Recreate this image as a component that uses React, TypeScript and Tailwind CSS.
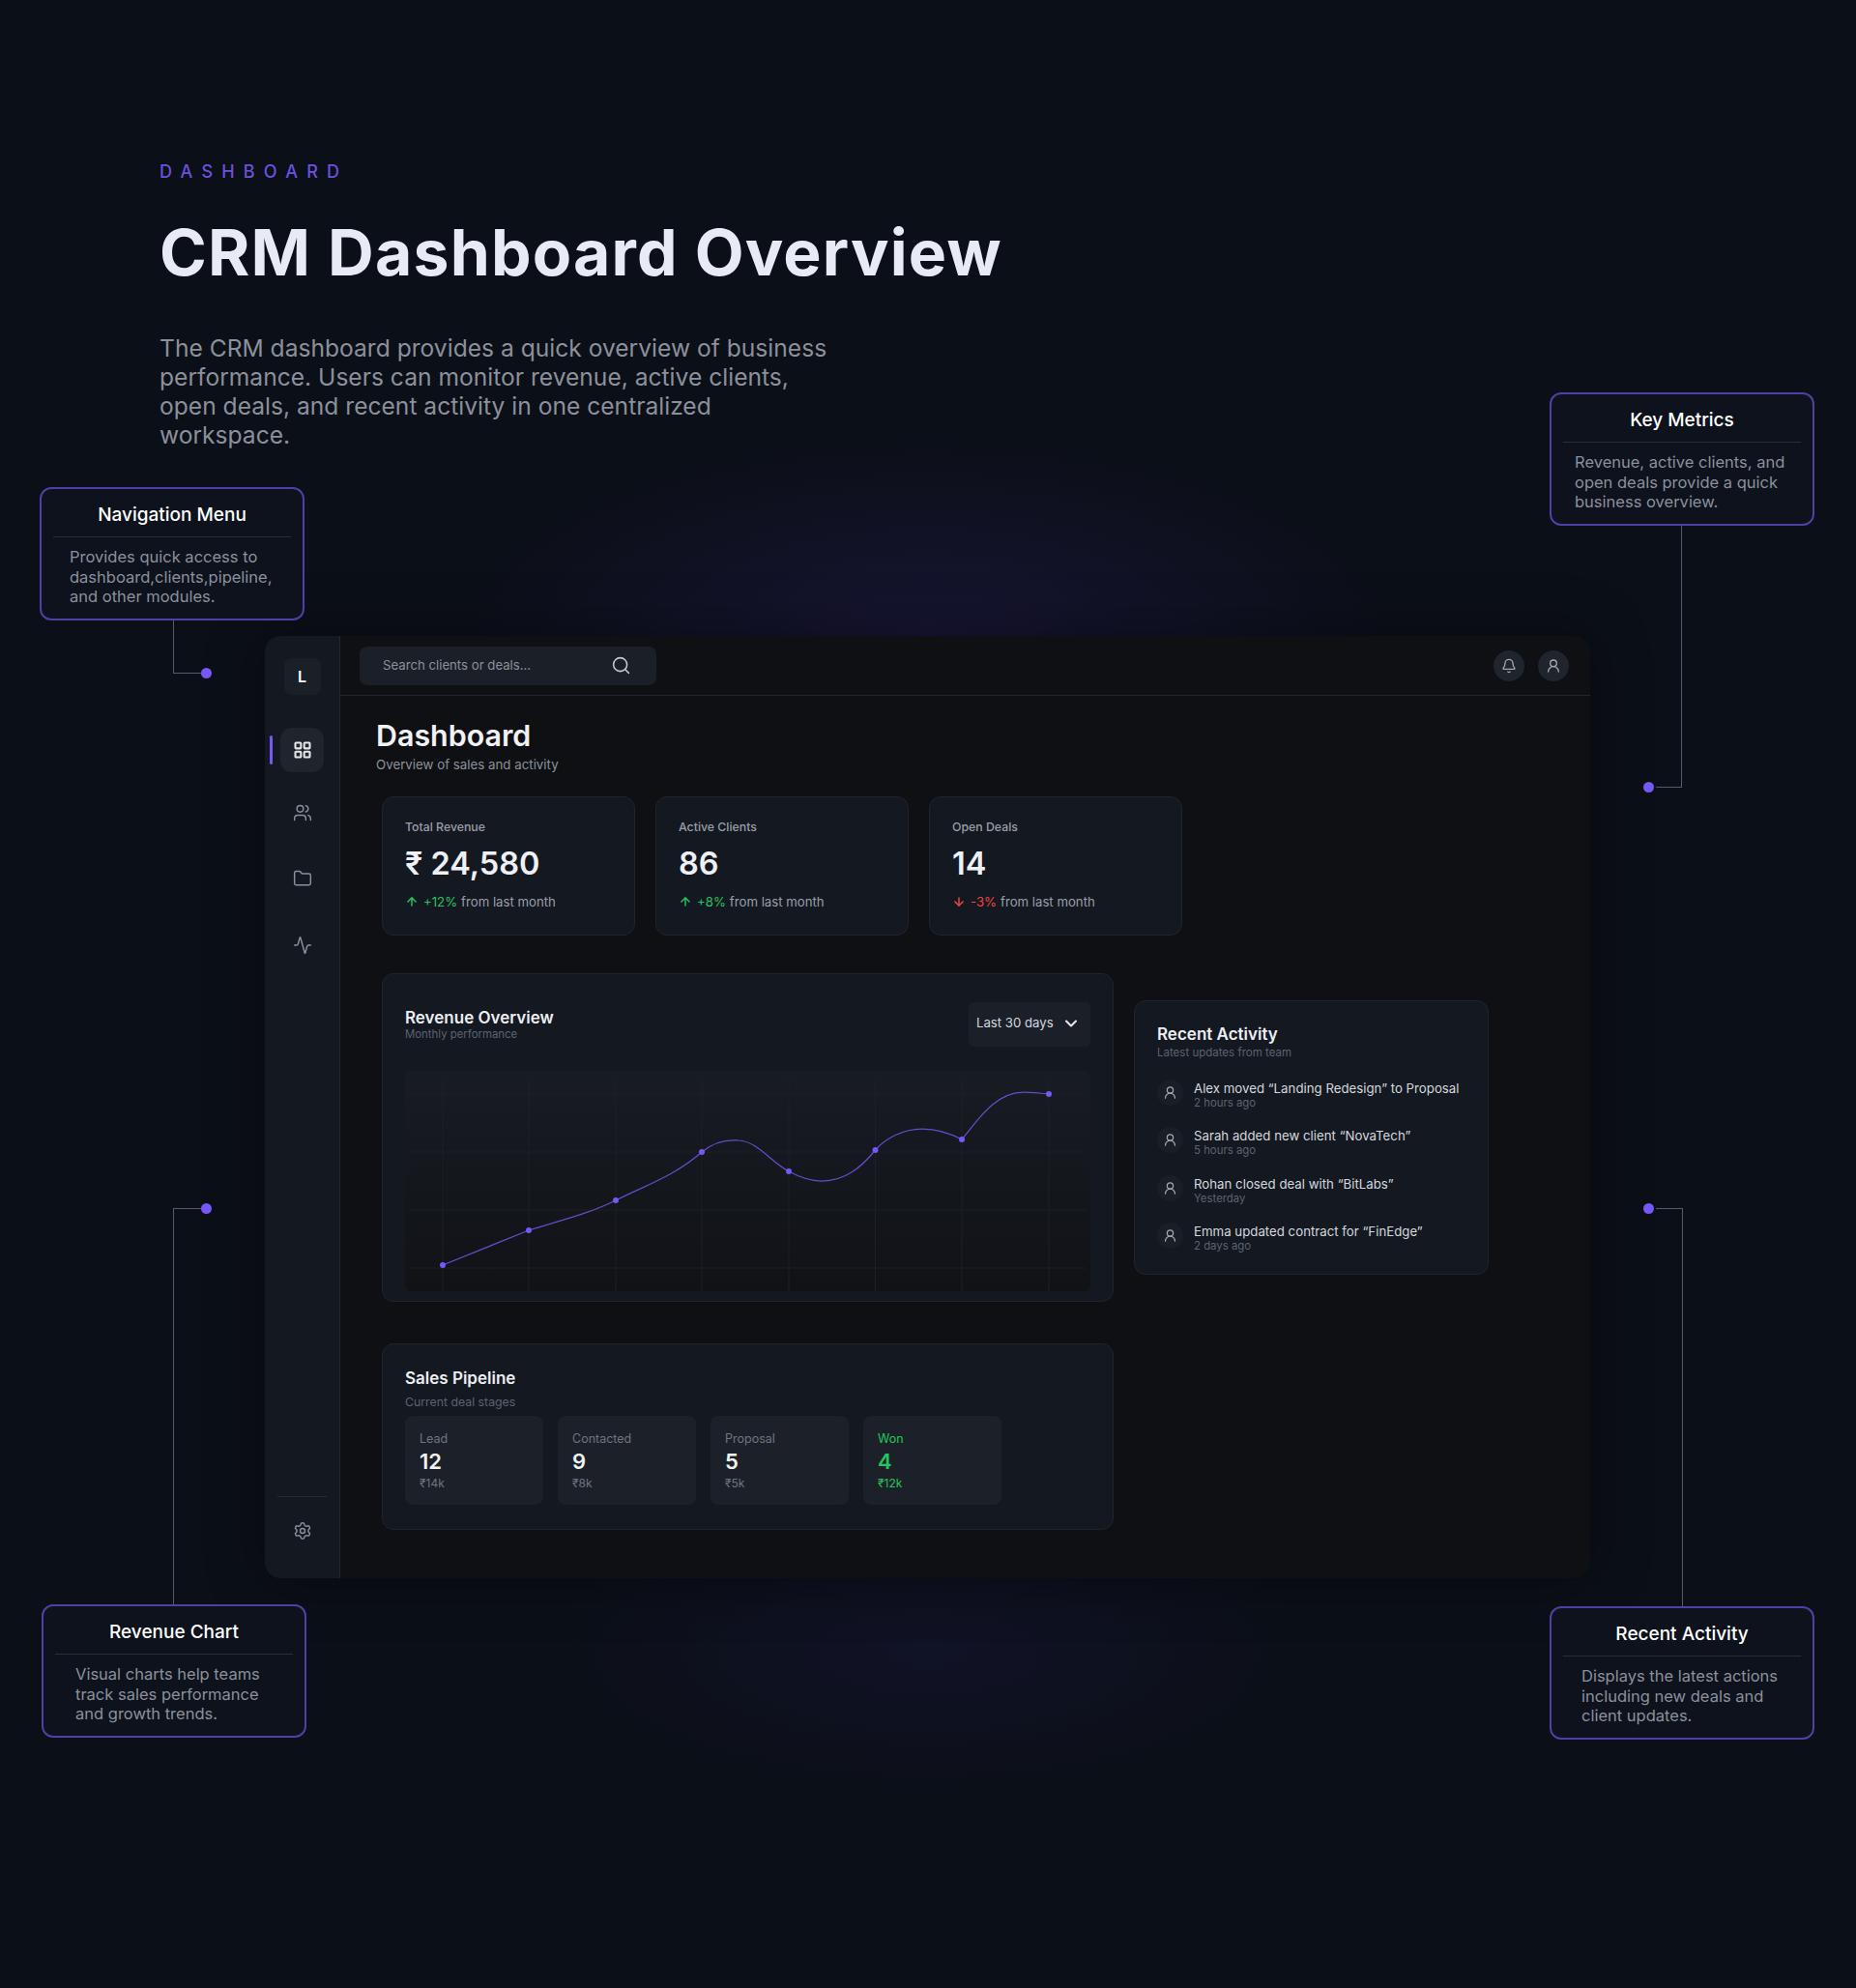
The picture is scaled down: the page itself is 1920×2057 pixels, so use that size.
import { ArrowDown, ArrowUp, Activity, Bell, ChevronDown, Folder, LayoutGrid, Search, Settings, UserRound, Users } from "lucide-react";

const font = { fontFamily: "Inter, sans-serif" };

const stats = [
  { label: "Total Revenue", value: "₹ 24,580", change: "+12%", up: true },
  { label: "Active Clients", value: "86", change: "+8%", up: true },
  { label: "Open Deals", value: "14", change: "-3%", up: false },
];

const activity = [
  { text: "Alex moved “Landing Redesign” to Proposal", time: "2 hours ago" },
  { text: "Sarah added new client “NovaTech”", time: "5 hours ago" },
  { text: "Rohan closed deal with “BitLabs”", time: "Yesterday" },
  { text: "Emma updated contract for “FinEdge”", time: "2 days ago" },
];

const stages = [
  { label: "Lead", count: "12", amount: "₹14k" },
  { label: "Contacted", count: "9", amount: "₹8k" },
  { label: "Proposal", count: "5", amount: "₹5k" },
  { label: "Won", count: "4", amount: "₹12k", won: true },
];

const xs = [39, 128, 218, 307, 397, 486.5, 576, 666];
const points: [number, number][] = [[39, 201], [128, 165], [218, 134], [307, 84], [397, 104], [486.5, 82], [576, 71], [666, 24]];

function Callout({ title, lines, className, bodyClass }: { title: string; lines: string[]; className: string; bodyClass: string }) {
  return (
    <div className={`absolute w-[274px] h-[138px] rounded-xl border-2 border-[#4f40a6] bg-[#0d121d] ${className}`}>
      <div className="mx-[12px] h-[50px] pt-[5px] border-b border-[#2a2e38] flex items-center justify-center text-[19px] font-medium text-white">
        {title}
      </div>
      <div className={`pt-[10px] text-[16.5px] leading-[20.5px] text-[#8b909b] ${bodyClass}`}>
        {lines.map((l) => (
          <div key={l}>{l}</div>
        ))}
      </div>
    </div>
  );
}

function Dot({ className }: { className: string }) {
  return <div className={`absolute w-[11px] h-[11px] rounded-full bg-[#7558f5] ${className}`} />;
}

function Line({ className }: { className: string }) {
  return <div className={`absolute bg-[#565b66] ${className}`} />;
}

function Chart() {
  return (
    <div className="mt-[25px] h-[228px] rounded-md bg-gradient-to-b from-[#181c23] to-[#101216] overflow-hidden">
      <svg width="709" height="228" viewBox="0 0 709 228" fill="none">
        {xs.map((x) => (
          <line key={x} x1={x} y1="8" x2={x} y2="228" stroke="#1c2027" strokeWidth="1" />
        ))}
        {[24, 84, 144, 204].map((y) => (
          <line key={y} x1="4" y1={y} x2="704" y2={y} stroke="#1c2027" strokeWidth="1" />
        ))}
        <path
          d="M39 201 L128 165 C160 155 190 148 218 134 C250 118 280 108 307 84 C320 73 333 71 345 72 C365 73 378 94 397 104 C408 110 420 114 431 114 C455 114 472 100 486.5 82 C497 70 515 60 535 60 C552 60 565 65 576 71 C592 52 610 22 640 22 C650 22 658 23 666 24"
          stroke="#644dcc"
          strokeWidth="1.25"
        />
        {points.map(([x, y]) => (
          <circle key={x} cx={x} cy={y} r="3" fill="#7558f5" />
        ))}
      </svg>
    </div>
  );
}

export default function App() {
  return (
    <div style={font} className="relative w-[1920px] h-[2057px] overflow-hidden bg-[#0b0f17]">
      <div className="absolute left-[460px] top-[450px] w-[1000px] h-[420px] rounded-full bg-[radial-gradient(closest-side,rgba(70,44,165,0.2),transparent)]" />
      <div className="absolute left-[560px] top-[1560px] w-[800px] h-[300px] rounded-full bg-[radial-gradient(closest-side,rgba(50,40,130,0.14),transparent)]" />

      <div className="relative pl-[165px] pt-[167px]">
        <div className="text-[18px] leading-[22px] font-medium tracking-[9.2px] text-[#6a52de]">DASHBOARD</div>
        <h1 className="mt-[32px] text-[66px] leading-[80px] font-bold tracking-[1.2px] text-[#e8ebf5]">CRM Dashboard Overview</h1>
        <p className="mt-[44px] w-[700px] text-[24.6px] leading-[30px] text-[#8b909b]">
          The CRM dashboard provides a quick overview of business performance. Users can monitor revenue, active clients, open deals, and recent activity in one centralized workspace.
        </p>
      </div>

      <div className="relative ml-[274px] mt-[193px] w-[1371px] h-[975px] flex rounded-2xl overflow-hidden bg-[#0e1013] shadow-[0_0_60px_rgba(2,3,8,0.4)]">
        <aside className="relative w-[78px] shrink-0 flex flex-col items-center border-r border-[#232730] bg-[#141821]">
          <div className="mt-[23px] w-[38px] h-[38px] rounded-lg bg-[#1b2028] flex items-center justify-center text-[16px] font-semibold text-white">L</div>
          <div className="absolute left-[5px] top-[103px] w-[3px] h-[30px] rounded-full bg-[#7558f5]" />
          <div className="mt-[34px] w-[45px] h-[46px] rounded-xl bg-[#1f242d] flex items-center justify-center">
            <LayoutGrid size={20} strokeWidth={2.5} className="text-[#e5e7eb]" />
          </div>
          <Users size={20} strokeWidth={1.75} className="mt-[32px] text-[#8a8f99]" />
          <Folder size={20} strokeWidth={1.75} className="mt-[48px] text-[#8a8f99]" />
          <Activity size={20} strokeWidth={1.75} className="mt-[49px] text-[#8a8f99]" />
          <div className="mt-auto w-[51px] border-t border-[#262a33]" />
          <Settings size={20} strokeWidth={1.75} className="mt-[25px] mb-[39px] text-[#8a8f99]" />
        </aside>

        <div className="flex-1 min-w-0">
          <header className="h-[62px] border-b border-[#23262c] flex items-center justify-between pl-[20px] pr-[22px]">
            <div className="w-[307px] h-[40px] rounded-lg bg-[#1b2028] flex items-center justify-between pl-[24px] pr-[26px]">
              <span className="text-[13.2px] text-[#8b909b]">Search clients or deals...</span>
              <Search size={21} strokeWidth={1.75} className="text-[#c5c8cf]" />
            </div>
            <div className="flex gap-[14px]">
              <div className="w-[32px] h-[32px] rounded-full bg-[#1f242d] flex items-center justify-center">
                <Bell size={16} strokeWidth={2} className="text-[#a4a8b1]" />
              </div>
              <div className="w-[32px] h-[32px] rounded-full bg-[#1f242d] flex items-center justify-center">
                <UserRound size={16} strokeWidth={2} className="text-[#a4a8b1]" />
              </div>
            </div>
          </header>

          <main className="pl-[37px]">
            <h2 className="mt-[20px] text-[30.4px] leading-[42px] font-semibold text-[#f1f2f5]">Dashboard</h2>
            <p className="text-[13.3px] leading-[18px] text-[#8b909b]">Overview of sales and activity</p>

            <div className="mt-[24px] ml-[6px] flex gap-[21px]">
              {stats.map((s) => (
                <div key={s.label} className="w-[262px] h-[144px] rounded-xl border border-[#1f242d] bg-[#141821] pl-[23px] pt-[22px]">
                  <div className="text-[12.3px] leading-[18px] font-medium text-[#9a9ea8]">{s.label}</div>
                  <div className="mt-[9px] text-[32.5px] leading-[40px] font-semibold text-[#eef0f5]">{s.value}</div>
                  <div className="mt-[10px] flex items-center text-[13.2px] leading-[18px] text-[#9a9ea8]">
                    {s.up ? (
                      <ArrowUp size={14} strokeWidth={2.5} className="text-[#22c55e]" />
                    ) : (
                      <ArrowDown size={14} strokeWidth={2.5} className="text-[#ef4444]" />
                    )}
                    <span className={`ml-[5px] mr-[4px] ${s.up ? "text-[#22c55e]" : "text-[#ef4444]"}`}>{s.change}</span>
                    from last month
                  </div>
                </div>
              ))}
            </div>

            <div className="mt-[39px] ml-[6px] flex items-start gap-[21px]">
              <div className="w-[757px]">
                <section className="h-[340px] rounded-xl border border-[#1f242d] bg-[#141821] px-[23px] pt-[29px]">
                  <div className="flex items-start justify-between">
                    <div className="pt-[6px]">
                      <h3 className="text-[17px] leading-[20px] font-semibold text-[#eceef2]">Revenue Overview</h3>
                      <p className="text-[11.4px] leading-[14px] text-[#5c6370]">Monthly performance</p>
                    </div>
                    <div className="w-[126px] h-[46px] rounded-md bg-[#1b2028] flex items-center justify-between pl-[8px] pr-[10px] pb-[2px] text-[13.2px] text-[#d5d8de]">
                      Last 30 days
                      <ChevronDown size={20} strokeWidth={2.5} className="text-[#e5e7eb]" />
                    </div>
                  </div>
                  <Chart />
                </section>

                <section className="mt-[43px] h-[193px] rounded-xl border border-[#1f242d] bg-[#141821] px-[23px] pt-[23px]">
                  <h3 className="text-[17px] leading-[24px] font-semibold text-[#eceef2]">Sales Pipeline</h3>
                  <p className="mt-[5px] text-[12.3px] leading-[16px] text-[#5c6370]">Current deal stages</p>
                  <div className="mt-[6px] flex gap-[15px]">
                    {stages.map((s) => (
                      <div key={s.label} className="w-[143px] h-[92px] rounded-lg bg-[#1c2129] pl-[15px] pt-[16px]">
                        <div className={`text-[12.5px] leading-[16px] ${s.won ? "text-[#22c55e]" : "text-[#6f7480]"}`}>{s.label}</div>
                        <div className={`text-[22px] leading-[30px] font-semibold ${s.won ? "text-[#22c55e]" : "text-[#f1f2f5]"}`}>{s.count}</div>
                        <div className={`text-[12px] leading-[16px] ${s.won ? "text-[#22c55e]" : "text-[#6f7480]"}`}>{s.amount}</div>
                      </div>
                    ))}
                  </div>
                </section>
              </div>

              <section className="mt-[28px] w-[367px] h-[284px] rounded-xl border border-[#1f242d] bg-[#141821] pl-[23px] pt-[23px]">
                <h3 className="text-[17px] leading-[22px] font-semibold text-[#eceef2]">Recent Activity</h3>
                <p className="text-[11.5px] leading-[16px] text-[#5c6370]">Latest updates from team</p>
                <div className="mt-[20.5px] flex flex-col gap-[19.6px]">
                  {activity.map((a) => (
                    <div key={a.text} className="flex items-start h-[30px]">
                      <div className="-mt-[1px] w-[27px] h-[27px] rounded-full bg-[#1a1e26] flex items-center justify-center shrink-0">
                        <UserRound size={15} strokeWidth={2} className="text-[#a4a8b1]" />
                      </div>
                      <div className="ml-[11px]">
                        <div className="text-[13.25px] leading-[16px] text-[#d5d8de]">{a.text}</div>
                        <div className="text-[11.4px] leading-[14px] text-[#5c6370]">{a.time}</div>
                      </div>
                    </div>
                  ))}
                </div>
              </section>
            </div>
          </main>
        </div>
      </div>

      <Callout title="Navigation Menu" lines={["Provides quick access to", "dashboard,clients,pipeline,", "and other modules."]} className="left-[41px] top-[504px]" bodyClass="pl-[29px]" />
      <Line className="left-[179px] top-[642px] w-[1px] h-[54px]" />
      <Line className="left-[179px] top-[696px] w-[29px] h-[1px]" />
      <Dot className="left-[208px] top-[691px]" />

      <Callout title="Key Metrics" lines={["Revenue, active clients, and", "open deals provide a quick", "business overview."]} className="left-[1603px] top-[406px]" bodyClass="pl-[24px]" />
      <Line className="left-[1739px] top-[544px] w-[1px] h-[271px]" />
      <Line className="left-[1713px] top-[814px] w-[27px] h-[1px]" />
      <Dot className="left-[1700px] top-[809px]" />

      <Dot className="left-[208px] top-[1245px]" />
      <Line className="left-[179px] top-[1250px] w-[29px] h-[1px]" />
      <Line className="left-[179px] top-[1250px] w-[1px] h-[410px]" />
      <Callout title="Revenue Chart" lines={["Visual charts help teams", "track sales performance", "and growth trends."]} className="left-[43px] top-[1660px]" bodyClass="pl-[33px]" />

      <Dot className="left-[1700px] top-[1245px]" />
      <Line className="left-[1713px] top-[1250px] w-[27px] h-[1px]" />
      <Line className="left-[1740px] top-[1250px] w-[1px] h-[412px]" />
      <Callout title="Recent Activity" lines={["Displays the latest actions", "including new deals and", "client updates."]} className="left-[1603px] top-[1662px]" bodyClass="pl-[31px]" />
    </div>
  );
}
